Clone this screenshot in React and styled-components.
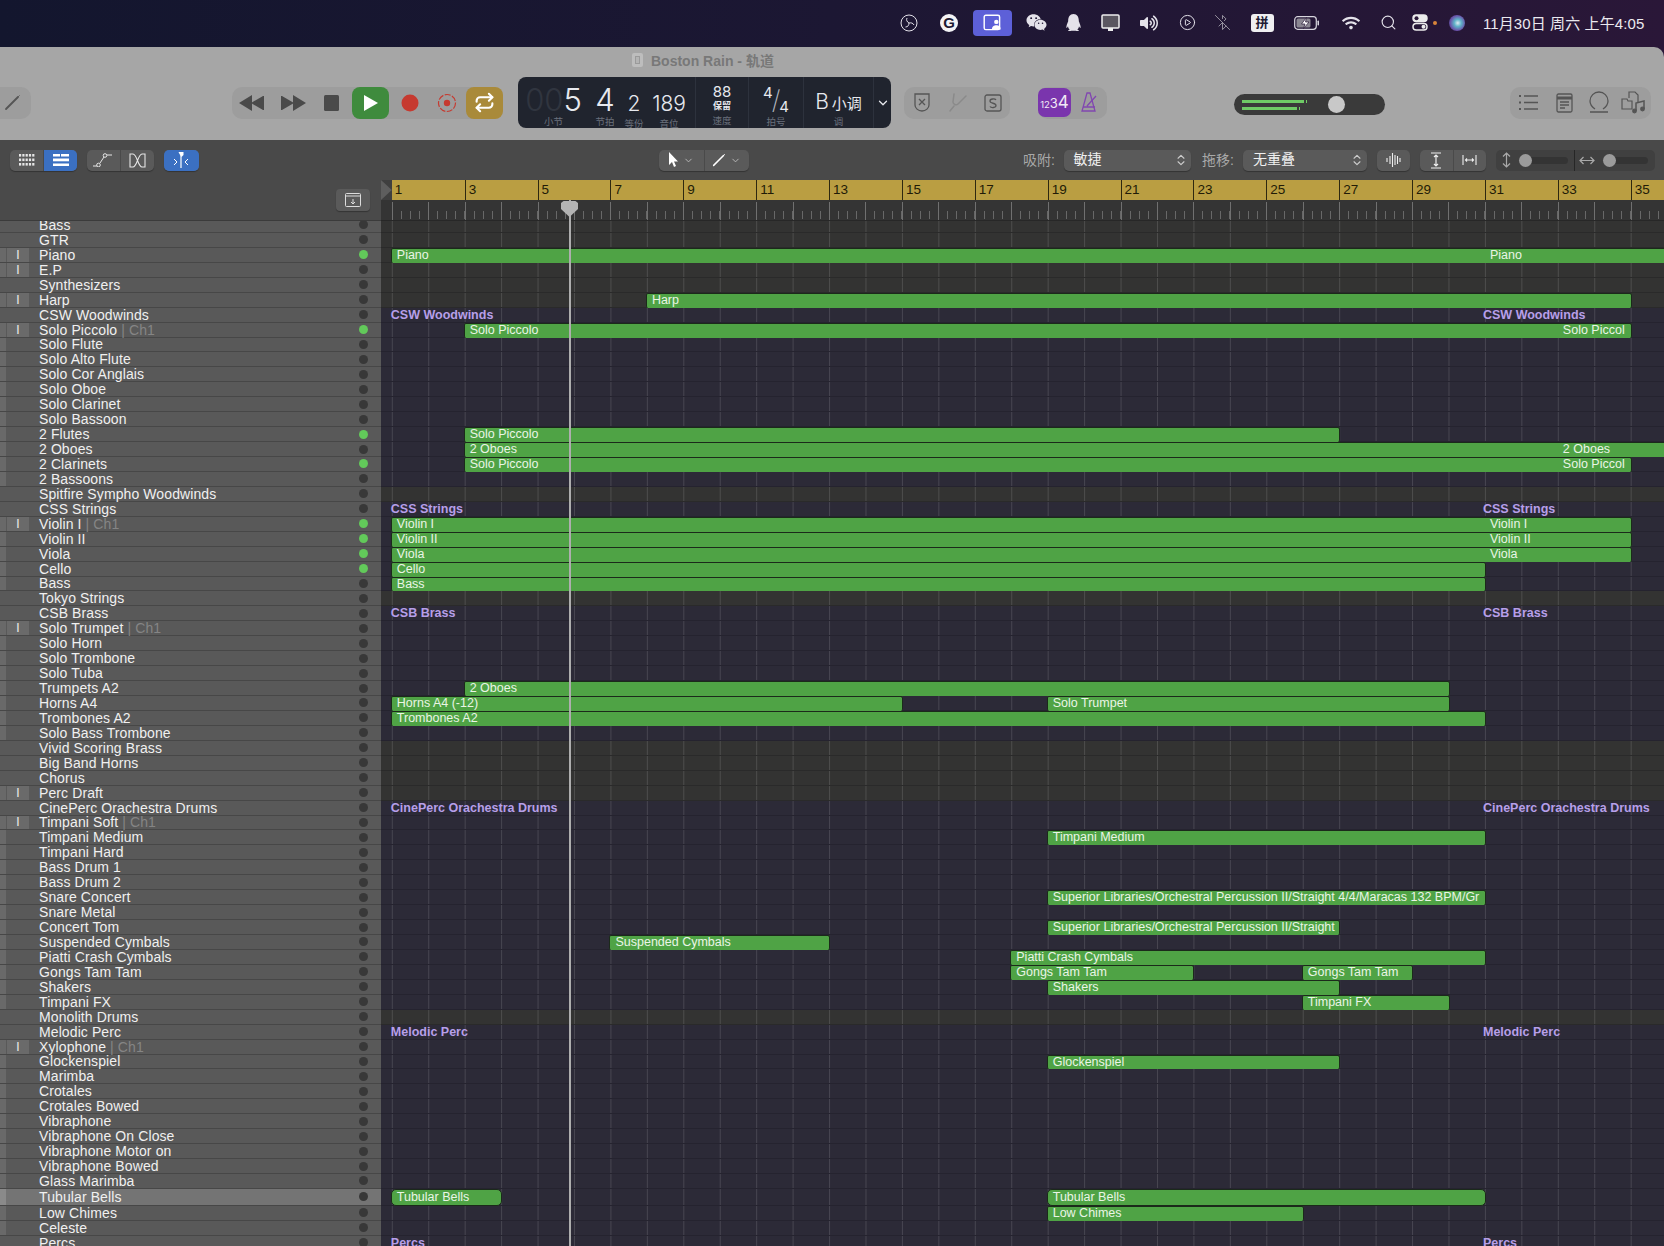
import React from 'react';
import styled, { createGlobalStyle } from 'styled-components';
import { FaWeixin, FaQq, FaWifi, FaVolumeUp } from 'react-icons/fa';
import { CirclePlay, BluetoothOff, Search, Repeat, ChevronDown, ChevronsUpDown } from 'lucide-react';

const BAR_W = 36.44;
const BAR_ONE = 391.8;
const LANE_LEFT = 381;
const ROW_H = 14.95;
const SELECTED_H = 17;
const barX = (bar) => (bar - 1) * BAR_W + BAR_ONE - LANE_LEFT;

const GlobalStyle = createGlobalStyle`
  html, body { margin: 0; padding: 0; background: #17162c; overflow: hidden; }
  * { box-sizing: border-box; }
  body { font-family: "Liberation Sans", "Noto Sans CJK SC", sans-serif; }
`;

const Screen = styled.div`
  width: 1664px;
  height: 1246px;
  overflow: hidden;
  display: flex;
  flex-direction: column;
  background: linear-gradient(90deg, #13162e 0%, #1c1733 50%, #2a1738 100%);
`;

/* menu bar */
const MenuBar = styled.div`
  height: 47px;
  flex: none;
  display: flex;
  align-items: center;
  justify-content: flex-end;
  padding: 0 18px 2px 0;
  color: #e4e2ea;
`;

const MenuSlot = styled.div`
  width: ${(p) => p.$w}px;
  height: 26px;
  display: flex;
  align-items: center;
  justify-content: center;
  gap: 5px;
`;

const ActiveApp = styled.div`
  width: 39px;
  height: 26px;
  border-radius: 4px;
  background: #5d60d8;
  display: flex;
  align-items: center;
  justify-content: center;
`;

const GlyphG = styled.span`
  width: 18px;
  height: 18px;
  border-radius: 9px;
  background: #f4f4f6;
  color: #1d1a33;
  font-size: 15px;
  font-weight: 700;
  line-height: 18px;
  text-align: center;
`;

const InputBadge = styled.span`
  width: 23px;
  height: 18px;
  border-radius: 3px;
  background: #efeff1;
  color: #1d1a33;
  font-size: 13px;
  font-weight: 700;
  line-height: 18px;
  text-align: center;
`;

const OrangeDot = styled.span`
  width: 4px;
  height: 4px;
  border-radius: 50%;
  background: #d9853a;
`;

const Siri = styled.span`
  width: 16px;
  height: 16px;
  border-radius: 50%;
  background: radial-gradient(circle at 55% 50%, #dfe9f2 0%, #5fb3c8 30%, #6a4fa8 65%, #1b3a52 100%);
`;

const Clock = styled.div`
  width: 163px;
  margin-left: 15px;
  font-size: 15px;
  letter-spacing: 0.1px;
  white-space: nowrap;
  color: #ebe9ef;
`;

/* window */
const Window = styled.div`
  flex: 1;
  min-height: 0;
  display: flex;
  flex-direction: column;
  border-radius: 0 10px 0 0;
  overflow: hidden;
  background: #a6a6a6;
`;

const TitleRow = styled.div`
  height: 30px;
  flex: none;
  display: flex;
  align-items: center;
  padding: 0 0 5px 632px;
  gap: 8px;
  color: #787878;
  font-size: 14px;
  font-weight: 700;
`;

const DocIcon = styled.span`
  width: 11px;
  height: 14px;
  border-radius: 2px;
  background: #b4b4b4;
  border: 3px solid #bdbdbd;
  box-shadow: inset 0 0 0 1px #9a9a9a;
`;

const ToolRow = styled.div`
  height: 63px;
  flex: none;
  display: flex;
  padding-bottom: 12px;
  align-items: center;
`;

const ToolGroup = styled.div`
  height: ${(p) => p.$h || 32}px;
  width: ${(p) => p.$w}px;
  margin-left: ${(p) => p.$ml || 0}px;
  flex: none;
  display: flex;
  align-items: center;
  border-radius: ${(p) => (p.$flushLeft ? '0 10px 10px 0' : '10px')};
  background: #9d9d9d;
  color: #4a4a4a;
`;

const ToolSlot = styled.div`
  width: ${(p) => p.$w}px;
  height: 100%;
  flex: none;
  display: flex;
  align-items: center;
  justify-content: center;
  padding-right: ${(p) => p.$pr || 0}px;
  border-radius: 8px;
  background: ${(p) => p.$bg || 'transparent'};
`;

const Lcd = styled.div`
  width: 373px;
  height: 51px;
  margin-left: 15px;
  flex: none;
  display: flex;
  border-radius: 8px;
  background: #20242e;
  color: #e7e9ee;
  font-family: Inter, "Liberation Sans", "Noto Sans CJK SC", sans-serif;
`;

const LcdSection = styled.div`
  width: ${(p) => p.$w}px;
  flex: none;
  display: flex;
  flex-direction: column;
  align-items: center;
  border-right: ${(p) => (p.$last ? 'none' : '1px solid #2d323d')};
`;

const LcdPosition = styled.div`
  width: 178px;
  flex: none;
  display: flex;
  align-items: baseline;
  padding: 7px 0 0 8px;
  border-right: 1px solid #2d323d;
`;

const LcdColumn = styled.div`
  width: ${(p) => p.$w}px;
  margin-right: ${(p) => p.$mr || 0}px;
  flex: none;
  display: flex;
  flex-direction: column;
  align-items: center;
`;

const LcdValue = styled.div`
  font-size: ${(p) => p.$size}px;
  font-weight: 300;
  line-height: 1;
  white-space: nowrap;
`;

const LcdDim = styled.span`
  color: #30353f;
`;

const LcdLabel = styled.div`
  margin-top: ${(p) => p.$mt || 0}px;
  font-size: 9.5px;
  line-height: 11px;
  color: #6a707c;
  font-family: "Noto Sans CJK SC", sans-serif;
  white-space: nowrap;
`;

const TempoValue = styled.div`
  margin-top: 7px;
  font-size: 15px;
  line-height: 16px;
  font-weight: 400;
`;

const TempoHold = styled.div`
  font-size: 9px;
  line-height: 12px;
  font-weight: 700;
  font-family: "Noto Sans CJK SC", sans-serif;
`;

const SigValue = styled.div`
  height: 30px;
  margin-top: 7px;
  display: flex;
  align-items: center;
  font-size: 15px;
  line-height: 15px;
`;

const SigTop = styled.span`
  align-self: flex-start;
  margin-top: 1px;
`;

const SigBottom = styled.span`
  align-self: flex-end;
`;

const SigSlash = styled.span`
  font-size: 26px;
  font-weight: 200;
  margin: 0 -1px;
  color: #b4b8c0;
`;

const KeyValue = styled.div`
  height: 30px;
  margin-top: 10px;
  display: flex;
  align-items: baseline;
  gap: 3px;
  font-size: 21px;
  font-weight: 300;
  line-height: 30px;
`;

const KeyMode = styled.span`
  font-size: 15px;
  font-weight: 400;
  font-family: "Noto Sans CJK SC", sans-serif;
`;

const KeyLabel = styled(LcdLabel)`
  margin-top: -1px;
`;

const MoreChevron = styled.div`
  margin-top: 19px;
  display: flex;
`;

const CountIn = styled.div`
  width: 33px;
  height: 29px;
  flex: none;
  border-radius: 7px;
  background: #7a35ad;
  color: #f1e9f6;
  display: flex;
  align-items: baseline;
  justify-content: center;
  font-size: 9.5px;
  line-height: 29px;
  font-family: Inter, "Liberation Sans", sans-serif;
`;

const CountBig = styled.span`
  font-size: ${(p) => p.$size}px;
`;

const VolumePill = styled.div`
  width: 151px;
  height: 21px;
  margin: 4px 0 0 127px;
  flex: none;
  display: flex;
  align-items: center;
  padding-left: 8px;
  border-radius: 11px;
  background: #3a3a3a;
`;

const Meters = styled.div`
  width: 85.5px;
  flex: none;
  display: flex;
  flex-direction: column;
  gap: 4px;
`;

const Meter = styled.div`
  position: relative;
  width: ${(p) => p.$w}px;
  height: 3px;
  background: #6fcb66;
  &::after {
    content: '';
    position: absolute;
    left: ${(p) => p.$w + 2}px;
    top: 0;
    width: 1px;
    height: 3px;
    background: #6fcb66;
  }
`;

const VolumeKnob = styled.div`
  width: 17px;
  height: 17px;
  border-radius: 50%;
  background: #c8c8c8;
`;

/* second bar */
const EditBar = styled.div`
  height: 40px;
  flex: none;
  display: flex;
  align-items: center;
  background: #494949;
  color: #e4e4e4;
`;

const Segmented = styled.div`
  width: ${(p) => p.$w}px;
  margin-left: ${(p) => p.$ml}px;
  height: 21px;
  flex: none;
  display: flex;
  border-radius: 5px;
  overflow: hidden;
  background: #5a5a5a;
  box-shadow: 0 1px 1px rgba(0, 0, 0, 0.3);
`;

const Segment = styled.div`
  flex: 1;
  display: flex;
  align-items: center;
  justify-content: center;
  gap: 4px;
  background: ${(p) => (p.$on ? '#3b70c2' : 'transparent')};
  & + & {
    border-left: 1px solid #4a4a4a;
  }
`;

const SnapLabel = styled.div`
  width: 34px;
  margin-left: ${(p) => p.$ml}px;
  padding-bottom: 3px;
  flex: none;
  font-size: 14px;
  color: #a8a8a8;
  white-space: nowrap;
`;

const SelectBox = styled.div`
  width: ${(p) => p.$w}px;
  margin-left: ${(p) => p.$ml}px;
  height: 21px;
  flex: none;
  display: flex;
  align-items: center;
  justify-content: space-between;
  padding: 0 3px 0 10px;
  border-radius: 5px;
  background: #5a5a5a;
  box-shadow: 0 1px 1px rgba(0, 0, 0, 0.3);
  color: #f0f0f0;
`;

const SelectText = styled.span`
  font-size: 14px;
  line-height: 16px;
  margin-top: -3px;
`;

const SliderGroup = styled.div`
  width: 159.5px;
  margin-left: 9.5px;
  height: 21px;
  flex: none;
  display: flex;
  border-radius: 5px;
  background: #404040;
  color: #a9a9a9;
`;

const SliderPart = styled.div`
  flex: none;
  width: ${(p) => p.$w}px;
  display: flex;
  align-items: center;
  padding-left: ${(p) => p.$pl}px;
  gap: 3px;
  & + & {
    border-left: 1px solid #262626;
  }
`;

const SliderTrack = styled.div`
  position: relative;
  width: ${(p) => p.$w}px;
  height: 7px;
  margin-left: 6px;
  border-radius: 4px;
  background: #343434;
`;

const SliderKnob = styled.div`
  position: absolute;
  left: -1px;
  top: -3px;
  width: 13px;
  height: 13px;
  border-radius: 50%;
  background: #9b9b9b;
`;

/* main */
const Main = styled.div`
  flex: 1;
  min-height: 0;
  display: flex;
  background: #3a3a3a;
`;

const TrackColumn = styled.div`
  width: ${LANE_LEFT}px;
  flex: none;
  display: flex;
  flex-direction: column;
  background: #4a4a4a;
`;

const TrackHeader = styled.div`
  height: 41px;
  flex: none;
  display: flex;
  justify-content: flex-end;
  align-items: flex-start;
  padding: 9px 11px 0 0;
  border-bottom: 1px solid #3b3b3b;
`;

const HeaderButton = styled.div`
  width: 34px;
  height: 22px;
  display: flex;
  align-items: center;
  justify-content: center;
  border-radius: 4px;
  background: #5a5a5a;
  color: #dcdcdc;
  box-shadow: 0 1px 1px rgba(0, 0, 0, 0.3);
`;

const Scroller = styled.div`
  flex: 1;
  min-height: 0;
  overflow: hidden;
`;

const RowStack = styled.div`
  margin-top: -3px;
`;

/* position: relative so the next row paints over the descenders of this one */
const TrackRow = styled.div`
  position: relative;
  height: ${(p) => (p.$selected ? SELECTED_H : ROW_H)}px;
  display: flex;
  align-items: center;
  background: ${(p) => (p.$selected ? '#747474' : '#595959')};
  border-bottom: 1px solid #474747;
`;

const Chunk = styled.div`
  width: 6px;
  height: 100%;
  flex: none;
  background: ${(p) => (!p.$show ? 'transparent' : p.$selected ? '#8a8a8a' : '#696969')};
`;

const InputBox = styled.div`
  width: 22px;
  height: 100%;
  margin-left: 1px;
  flex: none;
  display: flex;
  align-items: center;
  justify-content: center;
  background: ${(p) => (p.$show ? '#6a6a6a' : 'transparent')};
  color: #eee;
  font-size: 12px;
  line-height: 14px;
`;

const TrackName = styled.div`
  width: 320px;
  margin-left: 10px;
  padding-top: 1px;
  flex: none;
  font-size: 14px;
  letter-spacing: 0.1px;
  line-height: 15px;
  color: #f0f0f0;
  white-space: nowrap;
`;

const TrackChannel = styled.span`
  color: #858585;
`;

const ActivityDot = styled.div`
  width: 9px;
  height: 9px;
  border-radius: 50%;
  flex: none;
  background: ${(p) => (p.$on ? '#62c95a' : '#383838')};
`;

const Arrange = styled.div`
  position: relative;
  flex: 1;
  min-width: 0;
  display: flex;
  flex-direction: column;
`;

const Ruler = styled.div`
  height: 20px;
  flex: none;
  display: flex;
  overflow: hidden;
  background: #3f3f3f;
`;

const RulerMarker = styled.div`
  width: ${BAR_ONE - LANE_LEFT}px;
  flex: none;
  clip-path: polygon(0 0, 100% 50%, 0 100%);
  background: #5e5e5e;
`;

const RulerBar = styled.div`
  width: ${BAR_W}px;
  flex: none;
  padding: 2px 0 0 3px;
  font-size: 13.5px;
  line-height: 15px;
  color: #211b07;
  background: #ba9e42;
  border-left: ${(p) => (p.$odd ? '1px solid #2e2810' : 'none')};
`;

const TickStrip = styled.div`
  height: 21px;
  flex: none;
  display: flex;
  overflow: hidden;
  padding-left: ${BAR_ONE - LANE_LEFT}px;
  background: #343434;
  border-bottom: 1px solid #272727;
`;

const TickBar = styled.div`
  width: ${BAR_W}px;
  flex: none;
  margin-top: 2px;
  border-left: 1px solid #707070;
  background-image: repeating-linear-gradient(90deg, transparent 0, transparent ${BAR_W / 4 - 1}px, #686868 ${BAR_W / 4 - 1}px, #686868 ${BAR_W / 4}px);
  background-size: 100% 8px;
  background-position: left bottom 1px;
  background-repeat: no-repeat;
`;

const Lane = styled.div`
  position: relative;
  height: ${(p) => (p.$selected ? SELECTED_H : ROW_H)}px;
  background-color: ${(p) => (p.$plain ? '#333332' : '#2c2a37')};
  background-image: linear-gradient(90deg, rgba(255, 255, 255, 0.13) 1px, transparent 1px);
  background-size: ${BAR_W}px 100%;
  background-position: ${BAR_ONE - LANE_LEFT}px 0;
  border-bottom: 1px solid ${(p) => (p.$plain ? '#2a2a2a' : '#25232f')};
`;

const FolderLabel = styled.div`
  position: absolute;
  top: 0;
  left: 0;
  font-size: 12.5px;
  font-weight: 700;
  line-height: 14px;
  color: #b79fe9;
  white-space: nowrap;
`;

const Region = styled.div`
  position: absolute;
  top: 0;
  bottom: -1px;
  overflow: hidden;
  border: 1px solid #1b2a1a;
  border-bottom-width: ${(p) => (p.$round ? 1 : 0)}px;
  border-radius: ${(p) => (p.$round ? 5 : 2)}px;
  background: #4fa345;
`;

const RegionLabel = styled.span`
  position: absolute;
  top: ${(p) => (p.$round ? 1 : 0)}px;
  left: 0;
  font-size: 12.5px;
  line-height: 13px;
  color: #eaf5e6;
  white-space: nowrap;
`;

const Playhead = styled.div`
  position: absolute;
  left: ${568.5 - LANE_LEFT}px;
  top: 20px;
  bottom: 0;
  width: 2px;
  background: #aeaeae;
  &::before {
    content: '';
    position: absolute;
    left: -7.5px;
    top: 1px;
    width: 17px;
    height: 16px;
    background: #b4b4b4;
    clip-path: polygon(15% 0, 85% 0, 100% 12%, 100% 50%, 50% 100%, 0 50%, 0 12%);
  }
`;

/* data */
const TRACKS = [
  'Bass', 'GTR', 'Piano', 'E.P', 'Synthesizers', 'Harp', 'CSW Woodwinds', 'Solo Piccolo', 'Solo Flute',
  'Solo Alto Flute', 'Solo Cor Anglais', 'Solo Oboe', 'Solo Clarinet', 'Solo Bassoon', '2 Flutes', '2 Oboes',
  '2 Clarinets', '2 Bassoons', 'Spitfire Sympho Woodwinds', 'CSS Strings', 'Violin I', 'Violin II', 'Viola',
  'Cello', 'Bass', 'Tokyo Strings', 'CSB Brass', 'Solo Trumpet', 'Solo Horn', 'Solo Trombone', 'Solo Tuba',
  'Trumpets A2', 'Horns A4', 'Trombones A2', 'Solo Bass Trombone', 'Vivid Scoring Brass', 'Big Band Horns',
  'Chorus', 'Perc Draft', 'CinePerc Orachestra Drums', 'Timpani Soft', 'Timpani Medium', 'Timpani Hard',
  'Bass Drum 1', 'Bass Drum 2', 'Snare Concert', 'Snare Metal', 'Concert Tom', 'Suspended Cymbals',
  'Piatti Crash Cymbals', 'Gongs Tam Tam', 'Shakers', 'Timpani FX', 'Monolith Drums', 'Melodic Perc',
  'Xylophone', 'Glockenspiel', 'Marimba', 'Crotales', 'Crotales Bowed', 'Vibraphone', 'Vibraphone On Close',
  'Vibraphone Motor on', 'Vibraphone Bowed', 'Glass Marimba', 'Tubular Bells', 'Low Chimes', 'Celeste', 'Percs',
];

const INPUT_ROWS = [2, 3, 5, 7, 20, 27, 38, 40, 55];
const CHANNEL_ROWS = [7, 20, 27, 40, 55];
const ACTIVE_ROWS = [2, 7, 14, 16, 20, 21, 22, 23];
const FOLDER_ROWS = [0, 1, 4, 6, 18, 19, 25, 26, 35, 36, 37, 39, 53, 54, 68];
const PLAIN_LANES = [0, 1, 2, 3, 4, 5, 18, 25, 35, 36, 37, 38, 53];
const LANE_TITLES = { 6: 'CSW Woodwinds', 19: 'CSS Strings', 26: 'CSB Brass', 39: 'CinePerc Orachestra Drums', 54: 'Melodic Perc', 68: 'Percs' };
const SELECTED_ROW = 65;

// [from bar, to bar, label, later label, bar of later label]
const REGIONS = {
  2: [[1, 37, 'Piano', 'Piano', 31]],
  5: [[8, 35, 'Harp']],
  7: [[3, 35, 'Solo Piccolo', 'Solo Piccol', 33]],
  14: [[3, 27, 'Solo Piccolo']],
  15: [[3, 37, '2 Oboes', '2 Oboes', 33]],
  16: [[3, 35, 'Solo Piccolo', 'Solo Piccol', 33]],
  20: [[1, 35, 'Violin I', 'Violin I', 31]],
  21: [[1, 35, 'Violin II', 'Violin II', 31]],
  22: [[1, 35, 'Viola', 'Viola', 31]],
  23: [[1, 31, 'Cello']],
  24: [[1, 31, 'Bass']],
  31: [[3, 30, '2 Oboes']],
  32: [[1, 15, 'Horns A4 (-12)'], [19, 30, 'Solo Trumpet']],
  33: [[1, 31, 'Trombones A2']],
  41: [[19, 31, 'Timpani Medium']],
  45: [[19, 31, 'Superior Libraries/Orchestral Percussion II/Straight 4/4/Maracas 132 BPM/Gr']],
  47: [[19, 27, 'Superior Libraries/Orchestral Percussion II/Straight']],
  48: [[7, 13, 'Suspended Cymbals']],
  49: [[18, 31, 'Piatti Crash Cymbals']],
  50: [[18, 23, 'Gongs Tam Tam'], [26, 29, 'Gongs Tam Tam']],
  51: [[19, 27, 'Shakers']],
  52: [[26, 30, 'Timpani FX']],
  56: [[19, 27, 'Glockenspiel']],
  65: [[1, 4, 'Tubular Bells'], [19, 31, 'Tubular Bells']],
  66: [[19, 26, 'Low Chimes']],
};

const BARS = Array.from({ length: 36 }, (_, i) => i + 1);

/* icons */
const ObsIcon = () => (
  <svg width="18" height="18" viewBox="0 0 18 18" fill="none" stroke="currentColor" strokeWidth="1">
    <circle cx="9" cy="9" r="8" />
    <path d="M9 9c-2-1-3-3-2-5M9 9c2-.5 4 0 5 2M9 9c0 2-1 4-3.500 4" />
  </svg>
);

const ScreenPerson = () => (
  <svg width="22" height="18" viewBox="0 0 20 16" fill="none" stroke="#fff" strokeWidth="1.300">
    <rect x="2" y="1" width="14" height="13" rx="1.500" />
    <circle cx="13" cy="7" r="2" fill="#fff" stroke="none" />
    <path d="M9 14c0-3 2-4 4-4s4 1 4 4z" fill="#fff" stroke="none" />
  </svg>
);

const MonitorIcon = () => (
  <svg width="19" height="18" viewBox="0 0 19 18">
    <rect x="1" y="1" width="17" height="13" rx="1" fill="#5a5660" stroke="#eee" strokeWidth="1.500" />
    <rect x="7" y="14" width="5" height="3" fill="#eee" />
  </svg>
);

const BatteryIcon = () => (
  <svg width="26" height="14" viewBox="0 0 26 14" fill="none">
    <rect x="0.700" y="0.700" width="21.600" height="12.600" rx="3" stroke="#d8d6de" strokeWidth="1.200" />
    <rect x="2.500" y="2.500" width="14" height="9" rx="1.500" fill="#8b8792" />
    <path d="M12.500 1.500 7.500 8h3.500l-1.500 4.500L15 6h-3.500z" fill="#fff" stroke="#2a1838" strokeWidth="0.700" />
    <rect x="23.500" y="4.500" width="1.500" height="5" rx="0.700" fill="#d8d6de" />
  </svg>
);

const ControlIcon = () => (
  <svg width="16" height="17" viewBox="0 0 16 17" fill="none" stroke="#ececec" strokeWidth="1.500">
    <rect x="1" y="1" width="14" height="6.500" rx="3.250" fill="#ececec" />
    <circle cx="4.500" cy="4.250" r="2" fill="#2a1838" stroke="none" />
    <rect x="1" y="9.500" width="14" height="6.500" rx="3.250" />
    <circle cx="11.500" cy="12.750" r="2" fill="#ececec" stroke="none" />
  </svg>
);

const PencilIcon = ({ color = '#555', size = 17 }) => (
  <svg width={size} height={size} viewBox="0 0 17 17" fill="none" stroke={color} strokeWidth="1.800" strokeLinecap="round">
    <path d="M2 15 14 3" />
    <path d="M14.500 2.500l.8-.8" strokeWidth="1" />
  </svg>
);

const RewindIcon = ({ flip }) => (
  <svg width="26" height="16" viewBox="0 0 26 16" fill="#4a4a4a" transform={flip ? 'scale(-1 1)' : undefined}>
    <path d="M13 0v16L0 8z" />
    <path d="M25 1v14h-1L12 8 24 1z" />
  </svg>
);

const StopIcon = () => (
  <svg width="15" height="16" viewBox="0 0 15 16"><rect width="15" height="16" rx="1.500" fill="#4a4a4a" /></svg>
);

const PlayIcon = () => (
  <svg width="16" height="18" viewBox="0 0 16 18"><path d="M1 1l14 8-14 8z" fill="#fff" /></svg>
);

const RecordIcon = () => (
  <svg width="18" height="18" viewBox="0 0 18 18"><circle cx="9" cy="9" r="8.500" fill="#c63a30" /></svg>
);

const ReplaceIcon = () => (
  <svg width="20" height="20" viewBox="0 0 20 20" fill="none" stroke="#c63a30" strokeWidth="1.200">
    <circle cx="10" cy="10" r="8.500" strokeDasharray="6 1.500" />
    <circle cx="10" cy="10" r="3.200" fill="#c63a30" stroke="none" />
  </svg>
);

const ShieldX = () => (
  <svg width="18" height="21" viewBox="0 0 18 21" fill="none" stroke="#555" strokeWidth="1.300">
    <path d="M2 2h14v11c0 3-3 6-7 6s-7-3-7-6z" />
    <path d="M6 7l6 6M12 7l-6 6" />
  </svg>
);

const ForkIcon = () => (
  <svg width="20" height="20" viewBox="0 0 20 20" fill="none" stroke="#8a8a8a" strokeWidth="1.500" strokeLinecap="round">
    <path d="M6 1 5 9c0 2 3 4 5 2l8-8M2 18l4-5" />
  </svg>
);

const SoloIcon = () => (
  <svg width="18" height="18" viewBox="0 0 18 18" fill="none" stroke="#555" strokeWidth="1.300">
    <rect x="1" y="1" width="16" height="16" rx="2" />
    <path d="M12 6c-1-1.500-6-1.500-6 1 0 3 6 1.500 6 4.500 0 2.500-5 2.500-6 1" />
  </svg>
);

const Metronome = () => (
  <svg width="18" height="21" viewBox="0 0 18 21" fill="none" stroke="#8147b0" strokeWidth="1.300">
    <path d="M7 1h3l5 18H2z" />
    <path d="M3 15h12M7 14l9-10" />
  </svg>
);

const ListIcon = () => (
  <svg width="20" height="17" viewBox="0 0 20 17" fill="none" stroke="#555" strokeWidth="1.300">
    <path d="M6 2h14M6 8.500h14M6 15h14" />
    <path d="M1 2h2M1 8.500h2M1 15h2" strokeWidth="2" />
  </svg>
);

const NoteIcon = () => (
  <svg width="17" height="20" viewBox="0 0 17 20" fill="none" stroke="#555" strokeWidth="1.300">
    <rect x="1" y="1" width="15" height="18" rx="1.500" />
    <path d="M1 5h15" strokeWidth="3" />
    <path d="M4 9h9M4 12h9M4 15h5" />
  </svg>
);

const LoopIcon = () => (
  <svg width="20" height="23" viewBox="0 0 20 23" fill="none" stroke="#555" strokeWidth="1.300">
    <path d="M6 18C3 16 1 13 1 10a9 9 0 0 1 18 0c0 3-2 6-5 8" />
    <path d="M1 21h18" />
  </svg>
);

const BrowserIcon = () => (
  <svg width="25" height="24" viewBox="0 0 25 24" fill="none" stroke="#555" strokeWidth="1.200">
    <path d="M1 8h5l1 2h4v8H1zM8 7V1h6l3 3v7" />
    <path d="M15 20V12l8-2v8" strokeWidth="1.500" />
    <circle cx="13.500" cy="20" r="1.800" fill="#555" />
    <circle cx="21.500" cy="18" r="1.800" fill="#555" />
  </svg>
);

const GridIcon = () => (
  <svg width="16" height="12" viewBox="0 0 16 12" fill="#e6e6e6">
    {[0, 1, 2].map((r) => [0, 1, 2, 3, 4].map((c) => <rect key={`${r}-${c}`} x={c * 3.300} y={r * 4.500} width="2.200" height="2.600" />))}
  </svg>
);

const RowsIcon = () => (
  <svg width="16" height="12" viewBox="0 0 16 12" fill="#fff">
    <rect width="7" height="2.500" />
    <rect x="8" width="8" height="2.500" />
    <rect y="4.500" width="16" height="2.800" />
    <rect y="9.500" width="16" height="2.500" />
  </svg>
);

const CurveIcon = () => (
  <svg width="20" height="14" viewBox="0 0 20 14" fill="none" stroke="#e6e6e6" strokeWidth="1">
    <path d="M0 13h4M7 10l4-6M14 2h5" />
    <circle cx="5.500" cy="12" r="1.800" />
    <circle cx="12" cy="2.500" r="1.800" />
  </svg>
);

const FlexIcon = () => (
  <svg width="17" height="15" viewBox="0 0 17 15" fill="none" stroke="#e6e6e6" strokeWidth="1.100">
    <path d="M4 1H1v13h3c4 0 5-13 9-13h3v13h-3C9 14 8 1 4 1z" />
  </svg>
);

const CatchIcon = () => (
  <svg width="18" height="16" viewBox="0 0 18 16" fill="none" stroke="#fff" strokeWidth="1">
    <path d="M6.500 0h5v3l-2 2-2-3z" fill="#fff" stroke="none" />
    <path d="M9 3v13" strokeWidth="1.200" />
    <path d="M2 7l3 3-3 3M16 7l-3 3 3 3" />
  </svg>
);

const ArrowIcon = () => (
  <svg width="11" height="16" viewBox="0 0 11 16" fill="#fff"><path d="M1 0v13l3-3 2 5 2-1-2-4.500h4z" /></svg>
);

const WaveIcon = () => (
  <svg width="16" height="16" viewBox="0 0 16 16" stroke="#eee" strokeWidth="1.100">
    <path d="M1 6v4M4 4v8M6.500 1v14M9 3v10M11.500 4v8M14 6v4" />
  </svg>
);

const FitVertical = () => (
  <svg width="14" height="17" viewBox="0 0 14 17" fill="none" stroke="#eee" strokeWidth="1.200">
    <path d="M2 1h10M2 16h10M7 3v11M5 5l2-2 2 2M5 12l2 2 2-2" />
  </svg>
);

const FitHorizontal = () => (
  <svg width="15" height="12" viewBox="0 0 15 12" fill="none" stroke="#eee" strokeWidth="1.100">
    <path d="M1 1v10M14 1v10M3.500 6h8M5 4.500 3.500 6 5 7.500M10 4.500 11.500 6 10 7.500" />
  </svg>
);

const StretchV = () => (
  <svg width="9" height="16" viewBox="0 0 9 16" fill="none" stroke="currentColor" strokeWidth="1.200"><path d="M1 4.500 4.500 1 8 4.500M1 11.500 4.500 15 8 11.500M4.500 1v14" /></svg>
);

const StretchH = () => (
  <svg width="16" height="9" viewBox="0 0 16 9" fill="none" stroke="currentColor" strokeWidth="1.200"><path d="M4.500 1 1 4.500 4.500 8M11.500 1 15 4.500 11.500 8M1 4.500h14" /></svg>
);

const DownloadBox = () => (
  <svg width="16" height="14" viewBox="0 0 16 14" fill="none" stroke="currentColor" strokeWidth="1">
    <rect x="0.500" y="0.500" width="15" height="13" rx="1" />
    <path d="M1 3h14M8 6v5M6 9l2 2 2-2" />
  </svg>
);

const Lanes = () =>
  TRACKS.map((name, i) => (
    <Lane key={`${name}-${i}`} $plain={PLAIN_LANES.includes(i)} $selected={i === SELECTED_ROW}>
      {LANE_TITLES[i] && <FolderLabel style={{ left: barX(1) - 1 }}>{LANE_TITLES[i]}</FolderLabel>}
      {LANE_TITLES[i] && <FolderLabel style={{ left: barX(31) - 2 }}>{LANE_TITLES[i]}</FolderLabel>}
      {(REGIONS[i] || []).map(([from, to, label, later, laterBar]) => (
        <Region key={from} $round={i === SELECTED_ROW} style={{ left: barX(from) - 1, width: (to - from) * BAR_W + 2 }}>
          <RegionLabel $round={i === SELECTED_ROW} style={{ left: 5 }}>{label}</RegionLabel>
          {later && <RegionLabel style={{ left: (laterBar - from) * BAR_W + 5 }}>{later}</RegionLabel>}
        </Region>
      ))}
    </Lane>
  ));

const App = () => (
  <Screen>
    <GlobalStyle />
    <MenuBar>
      <MenuSlot $w={40}><ObsIcon /></MenuSlot>
      <MenuSlot $w={40}><GlyphG>G</GlyphG></MenuSlot>
      <MenuSlot $w={47}><ActiveApp><ScreenPerson /></ActiveApp></MenuSlot>
      <MenuSlot $w={40}><FaWeixin size={21} /></MenuSlot>
      <MenuSlot $w={34}><FaQq size={17} /></MenuSlot>
      <MenuSlot $w={40}><MonitorIcon /></MenuSlot>
      <MenuSlot $w={38}><FaVolumeUp size={18} /></MenuSlot>
      <MenuSlot $w={38}><CirclePlay size={17} strokeWidth={1.4} /></MenuSlot>
      <MenuSlot $w={32}><BluetoothOff size={17} strokeWidth={1.2} color="#a7a3ad" /></MenuSlot>
      <MenuSlot $w={48}><InputBadge>拼</InputBadge></MenuSlot>
      <MenuSlot $w={42}><BatteryIcon /></MenuSlot>
      <MenuSlot $w={46}><FaWifi size={18} /></MenuSlot>
      <MenuSlot $w={28}><Search size={17} strokeWidth={1.6} /></MenuSlot>
      <MenuSlot $w={44}><ControlIcon /><OrangeDot /></MenuSlot>
      <MenuSlot $w={22}><Siri /></MenuSlot>
      <Clock>11月30日 周六 上午4:05</Clock>
    </MenuBar>

    <Window>
      <TitleRow><DocIcon />Boston Rain - 轨道</TitleRow>
      <ToolRow>
        <ToolGroup $w={31} $flushLeft>
          <ToolSlot $w={25}><PencilIcon /></ToolSlot>
        </ToolGroup>
        <ToolGroup $w={271} $ml={201}>
          <ToolSlot $w={40}><RewindIcon /></ToolSlot>
          <ToolSlot $w={42}><RewindIcon flip /></ToolSlot>
          <ToolSlot $w={38} $pr={4}><StopIcon /></ToolSlot>
          <ToolSlot $w={37} $bg="#3f8b3d"><PlayIcon /></ToolSlot>
          <ToolSlot $w={42}><RecordIcon /></ToolSlot>
          <ToolSlot $w={35} $pr={3}><ReplaceIcon /></ToolSlot>
          <ToolSlot $w={37} $bg="#a98a3a"><Repeat size={21} strokeWidth={2.4} color="#fff" /></ToolSlot>
        </ToolGroup>
        <Lcd>
          <LcdPosition>
            <LcdColumn $w={55} $mr={14}>
              <LcdValue $size={31}><LcdDim>00</LcdDim>5</LcdValue>
              <LcdLabel $mt={1}>小节</LcdLabel>
            </LcdColumn>
            <LcdColumn $w={20} $mr={11}>
              <LcdValue $size={31}>4</LcdValue>
              <LcdLabel $mt={1}>节拍</LcdLabel>
            </LcdColumn>
            <LcdColumn $w={16} $mr={8}>
              <LcdValue $size={21}>2</LcdValue>
              <LcdLabel $mt={4}>等份</LcdLabel>
            </LcdColumn>
            <LcdColumn $w={38}>
              <LcdValue $size={21}>189</LcdValue>
              <LcdLabel $mt={4}>音位</LcdLabel>
            </LcdColumn>
          </LcdPosition>
          <LcdSection $w={53}>
            <TempoValue>88</TempoValue>
            <TempoHold>保留</TempoHold>
            <LcdLabel $mt={3}>速度</LcdLabel>
          </LcdSection>
          <LcdSection $w={55}>
            <SigValue><SigTop>4</SigTop><SigSlash>/</SigSlash><SigBottom>4</SigBottom></SigValue>
            <LcdLabel $mt={2}>拍号</LcdLabel>
          </LcdSection>
          <LcdSection $w={70}>
            <KeyValue>B<KeyMode>小调</KeyMode></KeyValue>
            <KeyLabel>调</KeyLabel>
          </LcdSection>
          <LcdSection $w={17} $last>
            <MoreChevron><ChevronDown size={14} strokeWidth={2.2} /></MoreChevron>
          </LcdSection>
        </Lcd>
        <ToolGroup $w={106} $ml={13}>
          <ToolSlot $w={36}><ShieldX /></ToolSlot>
          <ToolSlot $w={35}><ForkIcon /></ToolSlot>
          <ToolSlot $w={35}><SoloIcon /></ToolSlot>
        </ToolGroup>
        <ToolGroup $w={69} $ml={28}>
          <CountIn>12<CountBig $size={13}>3</CountBig><CountBig $size={17}>4</CountBig></CountIn>
          <ToolSlot $w={36}><Metronome /></ToolSlot>
        </ToolGroup>
        <VolumePill>
          <Meters>
            <Meter $w={62} />
            <Meter $w={55} />
          </Meters>
          <VolumeKnob />
        </VolumePill>
        <ToolGroup $w={141} $ml={125}>
          <ToolSlot $w={36}><ListIcon /></ToolSlot>
          <ToolSlot $w={36}><NoteIcon /></ToolSlot>
          <ToolSlot $w={34}><LoopIcon /></ToolSlot>
          <ToolSlot $w={35}><BrowserIcon /></ToolSlot>
        </ToolGroup>
      </ToolRow>

      <EditBar>
        <Segmented $w={67} $ml={10}>
          <Segment><GridIcon /></Segment>
          <Segment $on><RowsIcon /></Segment>
        </Segmented>
        <Segmented $w={66.5} $ml={10}>
          <Segment><CurveIcon /></Segment>
          <Segment><FlexIcon /></Segment>
        </Segmented>
        <Segmented $w={35} $ml={10}>
          <Segment $on><CatchIcon /></Segment>
        </Segmented>
        <Segmented $w={90} $ml={460.5}>
          <Segment><ArrowIcon /><ChevronDown size={11} color="#bbb" /></Segment>
          <Segment><PencilIcon color="#fff" size={14} /><ChevronDown size={11} color="#bbb" /></Segment>
        </Segmented>
        <SnapLabel $ml={274}>吸附:</SnapLabel>
        <SelectBox $w={127} $ml={6.5}><SelectText>敏捷</SelectText><ChevronsUpDown size={14} color="#ccc" /></SelectBox>
        <SnapLabel $ml={11.5}>拖移:</SnapLabel>
        <SelectBox $w={124} $ml={7}><SelectText>无重叠</SelectText><ChevronsUpDown size={14} color="#ccc" /></SelectBox>
        <Segmented $w={33} $ml={10}>
          <Segment><WaveIcon /></Segment>
        </Segmented>
        <Segmented $w={66} $ml={10}>
          <Segment><FitVertical /></Segment>
          <Segment><FitHorizontal /></Segment>
        </Segmented>
        <SliderGroup>
          <SliderPart $w={78.5} $pl={6}>
            <StretchV />
            <SliderTrack $w={48}><SliderKnob /></SliderTrack>
          </SliderPart>
          <SliderPart $w={81} $pl={4}>
            <StretchH />
            <SliderTrack $w={44}><SliderKnob /></SliderTrack>
          </SliderPart>
        </SliderGroup>
      </EditBar>

      <Main>
        <TrackColumn>
          <TrackHeader><HeaderButton><DownloadBox /></HeaderButton></TrackHeader>
          <Scroller>
            <RowStack>
              {TRACKS.map((name, i) => (
                <TrackRow key={`${name}-${i}`} $selected={i === SELECTED_ROW}>
                  <Chunk $show={!FOLDER_ROWS.includes(i)} $selected={i === SELECTED_ROW} />
                  <InputBox $show={INPUT_ROWS.includes(i)}>{INPUT_ROWS.includes(i) ? 'I' : ''}</InputBox>
                  <TrackName>
                    {name}
                    {CHANNEL_ROWS.includes(i) && <TrackChannel> | Ch1</TrackChannel>}
                  </TrackName>
                  <ActivityDot $on={ACTIVE_ROWS.includes(i)} />
                </TrackRow>
              ))}
            </RowStack>
          </Scroller>
        </TrackColumn>

        <Arrange>
          <Ruler>
            <RulerMarker />
            {BARS.map((bar) => (
              <RulerBar key={bar} $odd={bar % 2 === 1 && bar > 1}>{bar % 2 === 1 ? bar : ''}</RulerBar>
            ))}
          </Ruler>
          <TickStrip>
            {BARS.map((bar) => <TickBar key={bar} />)}
          </TickStrip>
          <Scroller>
            <RowStack><Lanes /></RowStack>
          </Scroller>
          <Playhead />
        </Arrange>
      </Main>
    </Window>
  </Screen>
);

export default App;
